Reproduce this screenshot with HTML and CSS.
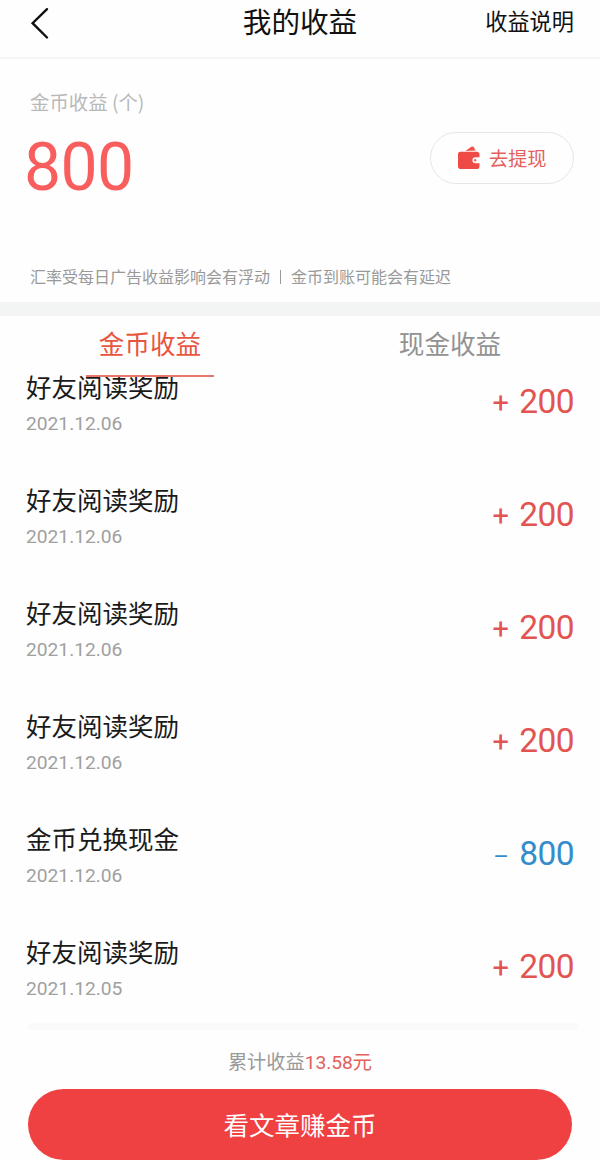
FILE: index.html
```html
<!DOCTYPE html>
<html lang="zh-CN">
  <head>
    <meta charset="UTF-8" />
    <title>我的收益</title>
    <link rel="stylesheet" href="styles.css">
  </head>
  <body>
    <header class="header">
      <a class="back">
        <svg width="20" height="34" viewBox="0 0 20 34" fill="none" stroke="#111" stroke-width="2.4" stroke-linecap="round">
          <path d="M17 3.2L2.6 17.2L17 31.5" />
        </svg>
      </a>
      <h1 class="title">我的收益</h1>
      <a class="explain">收益说明</a>
    </header>

    <section class="summary">
      <p class="label">金币收益 (个)</p>
      <div class="balance">
        <span class="coins">800</span>
        <button type="button" class="withdraw">
          <svg class="wallet" width="24" height="26" viewBox="0 0 24 26">
            <path d="M8.5 6L14.2 1.8Q16 0.8 17 2.4L18.6 5.6Z" fill="#ef5350" />
            <path d="M3.5 6.8H19.5Q22.5 6.8 22.5 9.6V12.2H18.4Q15.4 12.4 15.4 15.2T18.4 18.2H22.5V21.2Q22.5 24 19.5 24H4Q1 24 1 21.2V9Q1 6.8 3.5 6.8Z" fill="#ef4a46" />
            <circle cx="18.2" cy="15.2" r="1.2" fill="#ef6a60" />
          </svg>
          <span>去提现</span>
        </button>
      </div>
      <p class="note"><span>汇率受每日广告收益影响会有浮动</span><i class="bar"></i><span>金币到账可能会有延迟</span></p>
    </section>

    <nav class="tabs">
      <a class="tab active">金币收益</a>
      <a class="tab">现金收益</a>
    </nav>

    <ul class="list">
      <li class="row">
        <div><p class="name">好友阅读奖励</p><p class="date">2021.12.06</p></div>
        <span class="amount"><span class="sign">+</span>200</span>
      </li>
      <li class="row">
        <div><p class="name">好友阅读奖励</p><p class="date">2021.12.06</p></div>
        <span class="amount"><span class="sign">+</span>200</span>
      </li>
      <li class="row">
        <div><p class="name">好友阅读奖励</p><p class="date">2021.12.06</p></div>
        <span class="amount"><span class="sign">+</span>200</span>
      </li>
      <li class="row">
        <div><p class="name">好友阅读奖励</p><p class="date">2021.12.06</p></div>
        <span class="amount"><span class="sign">+</span>200</span>
      </li>
      <li class="row">
        <div><p class="name">金币兑换现金</p><p class="date">2021.12.06</p></div>
        <span class="amount minus"><span class="sign">–</span>800</span>
      </li>
      <li class="row">
        <div><p class="name">好友阅读奖励</p><p class="date">2021.12.05</p></div>
        <span class="amount"><span class="sign">+</span>200</span>
      </li>
    </ul>

    <footer class="footer">
      <p class="total">累计收益<span class="money">13.58元</span></p>
      <button type="button" class="earn">看文章赚金币</button>
    </footer>
  </body>
</html>
```

FILE: styles.css
```css
* {
  box-sizing: border-box;
  margin: 0;
  padding: 0;
}

body {
  width: 600px;
  height: 1160px;
  overflow: hidden;
  background-color: #fefefe;
  color: #1a1a1a;
  font-family: "Noto Sans CJK SC", sans-serif;
}

button {
  font-family: inherit;
  cursor: pointer;
}

.coins,
.date,
.amount,
.money {
  font-family: Roboto, "Noto Sans CJK SC", sans-serif;
}

.header {
  display: grid;
  grid-template-columns: 1fr auto 1fr;
  align-items: start;
  height: 59px;
  padding: 0 28px 0 28px;
  border-bottom: 2px solid #f5f5f5;
  color: #111;
}

.back {
  padding: 6px 0 0 2px;
}

.back svg {
  display: block;
}

.title {
  font-size: 28.6px;
  font-weight: 400;
  line-height: 42px;
}

.explain {
  justify-self: end;
  margin-right: -2px;
  font-size: 22.2px;
  line-height: 41px;
}

.summary {
  height: 257px;
  padding: 31px 26px 0;
  border-bottom: 14px solid #f3f4f4;
}

.label {
  padding-left: 4px;
  font-size: 19.4px;
  line-height: 24px;
  color: #b9b9b9;
}

.balance {
  display: flex;
  justify-content: space-between;
  align-items: flex-start;
  height: 150px;
  padding-top: 17px;
}

.coins {
  margin: 4px 0 0 -2px;
  font-size: 66px;
  line-height: 66px;
  letter-spacing: -0.6px;
  color: #f95e5e;
}

.withdraw {
  display: flex;
  align-items: center;
  width: 144px;
  height: 52px;
  margin-top: 1px;
  padding-left: 26px;
  border: 1px solid #e6e6e6;
  border-radius: 26px;
  background-color: #fefefe;
  color: #e5605c;
  font-size: 19.2px;
}

.wallet {
  margin-right: 8px;
}

.note {
  display: flex;
  align-items: center;
  padding-left: 4px;
  font-size: 16px;
  line-height: 24px;
  color: #999;
}

.bar {
  width: 1px;
  height: 14px;
  margin: 2px 10px 0;
  background-color: #999;
}

.tabs {
  display: flex;
  height: 55px;
}

.tab {
  position: relative;
  flex: 1;
  text-align: center;
  font-size: 25.6px;
  line-height: 53px;
  color: #929292;
}

.active {
  color: #e8553f;
}

/* the line lies over the first row of the list */
.active::after {
  content: "";
  position: absolute;
  left: 86px;
  top: 59px;
  width: 128px;
  height: 2px;
  background-color: #e8766a;
}

.list {
  display: flex;
  flex-direction: column;
  gap: 50.1px;
  height: 652px;
  padding: 0 26px;
  list-style: none;
}

.row {
  display: flex;
  justify-content: space-between;
  height: 63px;
}

.name {
  font-size: 25.5px;
  line-height: 30px;
}

.date {
  margin-top: 11px;
  font-size: 19.2px;
  line-height: 24px;
  color: #a0a0a0;
}

.amount {
  padding-top: 11px;
  font-size: 33.5px;
  line-height: 40px;
  letter-spacing: -0.6px;
  color: #e25452;
}

.sign {
  margin-right: 11px;
  font-size: 29px;
}

.minus {
  color: #348dcb;
}

.minus .sign {
  font-size: 24px;
}

.footer {
  padding: 0 28px;
}

.footer::before {
  content: "";
  display: block;
  width: 550px;
  height: 7px;
  background-color: #fafafa;
}

.total {
  height: 24px;
  margin-top: 19px;
  font-size: 19.2px;
  line-height: 24px;
  text-align: center;
  color: #999;
}

.money {
  color: #e2605c;
}

.earn {
  display: block;
  width: 100%;
  height: 71px;
  margin-top: 16px;
  padding-bottom: 2px;
  border: none;
  border-radius: 36px;
  background-color: #f04142;
  color: #fff;
  font-size: 25.5px;
}
```
